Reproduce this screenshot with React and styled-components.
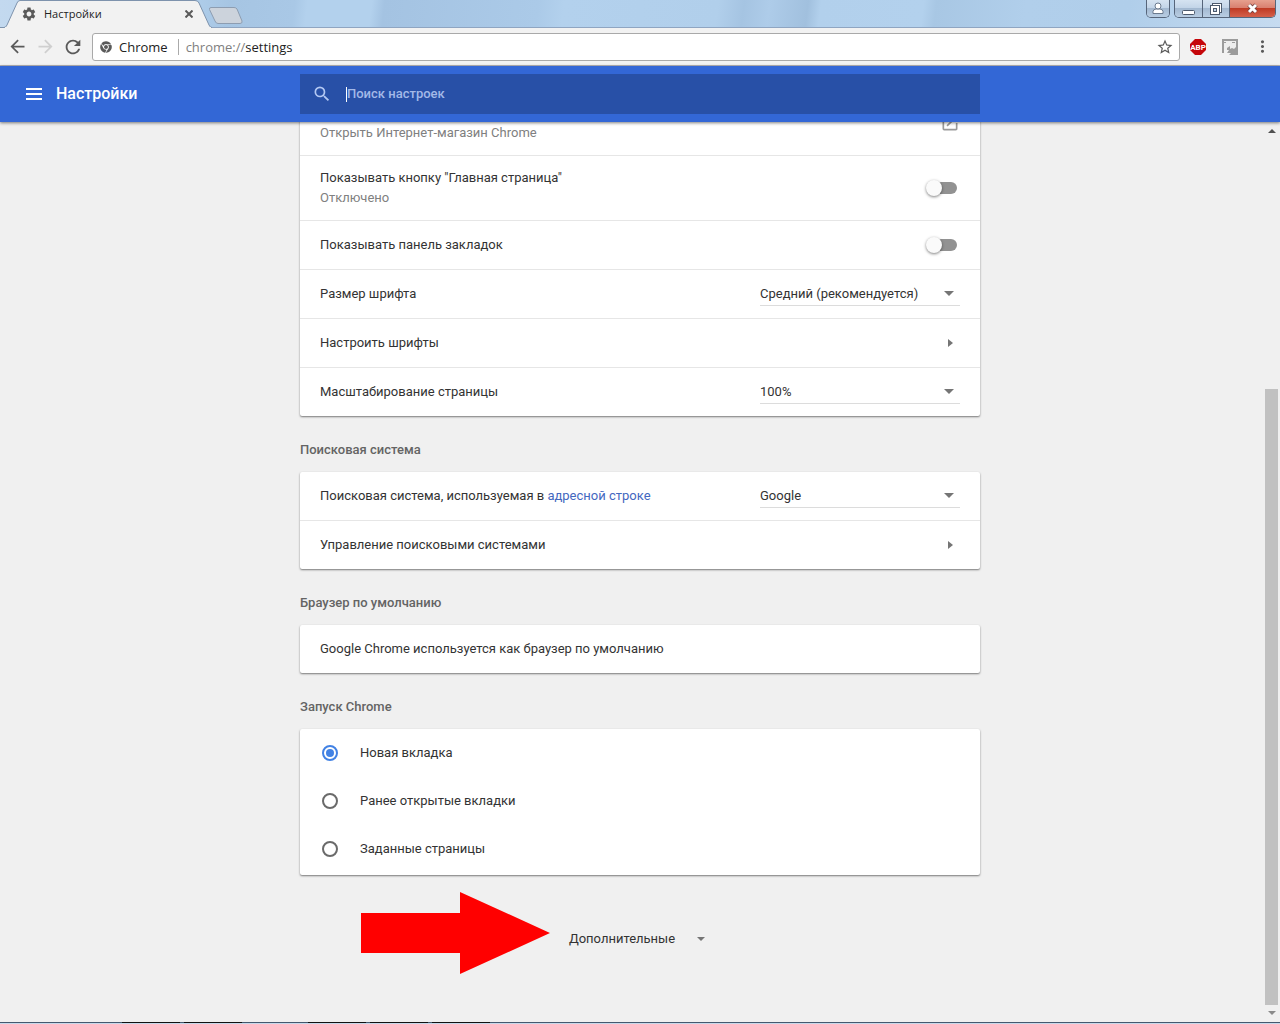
import React from 'react';
import styled, { createGlobalStyle } from 'styled-components';
import {
  MdArrowBack,
  MdArrowForward,
  MdMoreVert,
  MdOpenInNew,
  MdRefresh,
  MdSearch,
  MdSettings,
  MdStarBorder,
} from 'react-icons/md';
import { FaChrome } from 'react-icons/fa';

const GlobalStyle = createGlobalStyle`
  * {
    box-sizing: border-box;
  }

  body {
    margin: 0;
    background: #f0f0f0;
    color: #333;
    font-family: Roboto, "Liberation Sans", sans-serif;
    font-size: 13px;
    line-height: 20px;
  }

  button, input, select {
    margin: 0;
    padding: 0;
    border: 0;
    border-radius: 0;
    background: none;
    color: inherit;
    font: inherit;
  }
`;

const Window = styled.div`
  display: flex;
  flex-direction: column;
  height: 100vh;
  overflow: hidden;
`;

/* Title bar */

const TitleBar = styled.div`
  display: flex;
  align-items: flex-start;
  justify-content: space-between;
  height: 28px;
  background: linear-gradient(
    97deg,
    #c3d9ef 0%,
    #b3d1ed 14%,
    #a6c5e3 18%,
    #a9c8e6 23%,
    #b3d1ed 24%,
    #b3d1ed 29%,
    #a4c3e2 30%,
    #abcae8 42%,
    #b3d1ed 44%,
    #b1cfeb 56%,
    #a5c4e2 58%,
    #aecce9 60%,
    #a1c0de 63%,
    #b2d0ec 64%,
    #b3d1ed 72%,
    #a8c7e4 73%,
    #b1cfeb 80%,
    #b0ceea 88%,
    #c6dbf0 100%
  );
  box-shadow: inset 0 -1px #8fa5c1;
  font-family: "Open Sans", "Noto Sans", sans-serif;
  font-size: 12px;
`;

const Tabs = styled.div`
  display: flex;
  align-items: center;
  height: 28px;
`;

const Tab = styled.div`
  position: relative;
  display: flex;
  align-items: center;
  gap: 7px;
  width: 212px;
  height: 28px;
  padding: 0 16px 0 21px;
`;

const TabShape = styled.svg`
  position: absolute;
  inset: 0;
  z-index: 0;
`;

const TabTitle = styled.span`
  z-index: 1;
  flex: 1;
  font-size: 11px;
  color: #222;
`;

const TabIcon = styled(MdSettings)`
  z-index: 1;
  color: #5a5a5a;
`;

const IconButton = styled.button`
  display: flex;
  align-items: center;
  justify-content: center;
  z-index: 1;
  width: ${(props) => props.$width || 28}px;
  height: 28px;
  color: ${(props) => props.$color || '#5a5a5a'};
`;

const NewTabButton = styled(IconButton)`
  margin-left: -4px;
  padding-top: 3px;
`;

const WindowControls = styled.div`
  display: flex;
  padding-right: 4px;
`;

const ControlGroup = styled.div`
  display: flex;
  margin-left: 4px;
  border: 1px solid #56657a;
  border-top: 0;
  border-radius: 0 0 5px 5px;
  overflow: hidden;
`;

const ControlButton = styled.button`
  display: flex;
  align-items: center;
  justify-content: center;
  width: ${(props) => props.$width}px;
  height: 17px;
  background: ${(props) =>
    props.$close
      ? 'linear-gradient(#e6a08f 0%, #d98070 45%, #bf3b25 50%, #d5604a 100%)'
      : 'linear-gradient(#d5e3f1 0%, #c3d5e8 45%, #a3b9d1 50%, #b9cee3 100%)'};

  & + & {
    border-left: 1px solid #56657a;
  }
`;

/* Toolbar */

const Toolbar = styled.div`
  display: flex;
  align-items: center;
  height: 38px;
  padding: 0 4px 0 3px;
  border-bottom: 1px solid #b6b4b6;
  background: #f2f2f2;
`;

const Omnibox = styled.div`
  display: flex;
  flex: 1;
  align-items: center;
  height: 28px;
  margin: 0 4px 0 5px;
  padding-left: 7px;
  border: 1px solid #a9a9a9;
  border-radius: 3px;
  background: #fff;
  color: #222;
  font-family: "Open Sans", "Noto Sans", sans-serif;
`;

const SiteName = styled.span`
  margin-left: 7px;
  padding-right: 10px;
  border-right: 1px solid #aaa;
  line-height: 16px;
`;

const Address = styled.span`
  flex: 1;
  padding-left: 7px;
`;

const Scheme = styled.span`
  color: #808080;
`;

/* Settings header */

const Header = styled.header`
  display: grid;
  grid-template-columns: minmax(150px, 1fr) minmax(0, 680px) minmax(16px, 1fr);
  align-items: center;
  z-index: 2;
  flex: none;
  height: 56px;
  background: #3367d6;
  box-shadow: 0 1px 3px rgba(0, 0, 0, 0.5);
  color: #fff;
`;

const Brand = styled.div`
  display: flex;
  align-items: center;
  padding-left: 20px;
`;

const PageTitle = styled.h1`
  margin: 0 0 0 8px;
  font-size: 16px;
  font-weight: 500;
`;

const SearchBox = styled.label`
  display: flex;
  align-items: center;
  height: 40px;
  padding: 0 12px;
  background: #2850a7;
  color: #b3c8f3;
`;

const Caret = styled.span`
  width: 1px;
  height: 15px;
  margin-left: 14px;
  background: #fff;
`;

const SearchInput = styled.input`
  flex: 1;
  min-width: 0;
  outline: none;
  font-weight: 500;

  &::placeholder {
    color: #a3b9e8;
    opacity: 1;
  }
`;

/* Settings body */

const Body = styled.div`
  display: grid;
  grid-template-columns: minmax(16px, 1fr) minmax(0, 680px) minmax(16px, 1fr);
  flex: 1;
  min-height: 0;
  overflow: hidden;
`;

const Content = styled.main`
  display: flex;
  flex-direction: column;
  grid-column: 2;
  justify-content: flex-end;
  min-height: 0;
`;

const SectionTitle = styled.h2`
  margin: 24px 0 12px;
  color: #646464;
  font-size: 13px;
  font-weight: 500;
`;

const Card = styled.section`
  flex: none;
  padding-bottom: ${(props) => (props.$radios ? 2 : 0)}px;
  border-radius: 2px;
  background: #fff;
  box-shadow: 0 1px 2px rgba(0, 0, 0, 0.5);
`;

const Row = styled.div`
  box-sizing: content-box;
  display: flex;
  align-items: center;
  justify-content: space-between;
  min-height: ${(props) => (props.$tall ? 64 : 48)}px;
  padding: 0 20px;

  & + & {
    border-top: 1px solid #e6e6e6;
  }
`;

const StoreLink = styled.a`
  align-self: flex-end;
  padding-bottom: 12px;
  color: #808080;
  text-decoration: none;
`;

const Label = styled.label`
  display: flex;
  flex-direction: column;
`;

const Hint = styled.span`
  color: #808080;
`;

const Link = styled.a`
  color: #4468bf;
  text-decoration: none;
`;

const Toggle = styled.input`
  appearance: none;
  display: flex;
  align-items: center;
  width: 31px;
  height: 16px;
  margin-right: 3px;

  &::before {
    content: '';
    width: 16px;
    height: 16px;
    border-radius: 50%;
    background: #fafafa;
    box-shadow: 0 1px 3px rgba(0, 0, 0, 0.5);
    z-index: 1;
  }

  &::after {
    content: '';
    width: 23px;
    height: 12px;
    margin-left: -8px;
    border-radius: 6px;
    background: #929292;
  }
`;

const SelectBox = styled.div`
  display: grid;
  align-items: center;
  width: 200px;
  border-bottom: 1px solid #dcdcdc;

  & > * {
    grid-area: 1 / 1;
  }

  & > svg {
    justify-self: end;
    margin-right: 6px;
    pointer-events: none;
  }
`;

const Select = styled.select`
  appearance: none;
  height: 22px;
  outline: none;
`;

const ArrowButton = styled.button`
  display: flex;
  align-items: center;
  justify-content: center;
  width: 20px;
  height: 20px;
`;

const RadioRow = styled.label`
  display: flex;
  align-items: center;
  gap: 22px;
  height: 48px;
  padding: 0 22px;
`;

const Radio = styled.input`
  appearance: none;
  display: grid;
  place-items: center;
  width: 16px;
  height: 16px;
  border: 2px solid #6a6a6a;
  border-radius: 50%;

  &:checked {
    border-color: #4282e4;
  }

  &:checked::before {
    content: '';
    width: 8px;
    height: 8px;
    border-radius: 50%;
    background: #4282e4;
  }
`;

const Advanced = styled.div`
  position: relative;
  display: flex;
  flex: none;
  justify-content: center;
  padding: 46px 0 65px;
`;

const AdvancedButton = styled.button`
  display: flex;
  align-items: center;
  gap: 22px;
  height: 36px;
  padding-right: 6px;
`;

const Pointer = styled.svg`
  position: absolute;
  top: 17px;
  right: calc(50% + 90px);
`;

const Scrollbar = styled.div`
  display: flex;
  flex-direction: column;
  align-items: center;
  justify-self: end;
  width: 17px;
  padding: 7px 0;
`;

const ScrollTrack = styled.div`
  display: flex;
  flex: 1;
  flex-direction: column;
  justify-content: flex-end;
  align-self: stretch;
  margin: 4px 2px 6px;
`;

const Thumb = styled.div`
  height: 71%;
  background: #c1c1c1;
`;

const Taskbar = styled.div`
  display: flex;
  flex: none;
  height: 2px;
  padding-left: 122px;
  border-top: 1px solid #44586e;
  background: #c8d9ea;
`;

const TaskGroup = styled.div`
  display: flex;
  gap: 4px;
  margin: -1px 66px 0 0;
`;

const Task = styled.div`
  width: 58px;
  height: 1px;
  background: #111;
`;

const DownArrow = ({ size = 10 }) => (
  <svg width={size} height={size / 2} viewBox="0 0 10 5" fill="#757575">
    <path d="M0 0h10L5 5z" />
  </svg>
);

const TabBackground = () => (
  <TabShape width="212" height="28" viewBox="0 0 212 28">
    <path
      d="M0 27.5H4Q6 27.5 7 25L17 3Q18 .5 20 .5H195Q198 .5 199 3L209 25Q210 27.5 212 27.5V28H0Z"
      fill="#f2f2f2"
      stroke="#7e93ad"
    />
    <path d="M5 28H211" stroke="#f2f2f2" strokeWidth="2" />
  </TabShape>
);

const Dropdown = ({ label, value }) => (
  <SelectBox>
    <Select aria-label={label} defaultValue={value}>
      <option>{value}</option>
    </Select>
    <DownArrow />
  </SelectBox>
);

const NextButton = ({ label }) => (
  <ArrowButton aria-label={label}>
    <svg width="5" height="8" viewBox="0 0 5 8" fill="#757575">
      <path d="M0 0v8l5-4z" />
    </svg>
  </ArrowButton>
);

const Controls = () => (
  <WindowControls>
    <ControlGroup>
      <ControlButton $width={22} aria-label="Профиль">
        <svg width="12" height="13" viewBox="0 0 12 13" fill="#fff" stroke="#6b7b8f">
          <path d="M1 11.500V9.500Q1 7.500 4 7H8Q11 7.500 11 9.500V11.500Z" />
          <circle cx="6" cy="4" r="3" />
        </svg>
      </ControlButton>
    </ControlGroup>
    <ControlGroup>
      <ControlButton $width={27} aria-label="Свернуть">
        <svg width="13" height="14" viewBox="0 0 13 14">
          <rect x="0.5" y="8.500" width="12" height="4" rx="1" fill="#fff" stroke="#4c5a6d" />
        </svg>
      </ControlButton>
      <ControlButton $width={27} aria-label="Развернуть">
        <svg width="12" height="12" viewBox="0 0 12 12" fill="#fff" stroke="#4c5a6d">
          <rect x="2.500" y="0.500" width="9" height="9" />
          <rect x="0.500" y="2.500" width="9" height="9" />
          <rect x="3.500" y="5.500" width="3" height="3" fill="#c3d5e8" />
        </svg>
      </ControlButton>
      <ControlButton $width={46} $close aria-label="Закрыть">
        <svg width="13" height="11" viewBox="0 0 13 11">
          <path d="M3 2l7 7M10 2l-7 7" stroke="#6b3a3a" strokeWidth="4.500" />
          <path d="M3 2l7 7M10 2l-7 7" stroke="#fff" strokeWidth="3" />
        </svg>
      </ControlButton>
    </ControlGroup>
  </WindowControls>
);

const startupOptions = ['Новая вкладка', 'Ранее открытые вкладки', 'Заданные страницы'];

const App = () => (
  <Window>
    <GlobalStyle />
    <TitleBar>
      <Tabs>
        <Tab>
          <TabBackground />
          <TabIcon size={16} />
          <TabTitle>Настройки</TabTitle>
          <IconButton $width={14} aria-label="Закрыть вкладку">
            <svg width="8" height="8" viewBox="0 0 8 8">
              <path d="M.5 .5l7 7M7.500 .5l-7 7" stroke="#5a5a5a" strokeWidth="2" />
            </svg>
          </IconButton>
        </Tab>
        <NewTabButton $width={36} aria-label="Открыть новую вкладку">
          <svg width="34" height="17" viewBox="0 0 34 17">
            <path
              d="M2 .5H25Q27 .5 28 2L33 14Q33.500 16.500 31 16.500H9Q7 16.500 6 14L.5 2.500Q0 .5 2 .5Z"
              fill="#ccd3dc"
              stroke="#8d9db1"
            />
          </svg>
        </NewTabButton>
      </Tabs>
      <Controls />
    </TitleBar>

    <Toolbar>
      <IconButton aria-label="Назад">
        <MdArrowBack size={21} />
      </IconButton>
      <IconButton aria-label="Вперёд" $color="#cfcfcf">
        <MdArrowForward size={21} />
      </IconButton>
      <IconButton aria-label="Обновить">
        <MdRefresh size={22} />
      </IconButton>
      <Omnibox>
        <FaChrome size={12} color="#5a5a5a" />
        <SiteName>Chrome</SiteName>
        <Address>
          <Scheme>chrome://</Scheme>settings
        </Address>
        <IconButton aria-label="Добавить в закладки">
          <MdStarBorder size={18} />
        </IconButton>
      </Omnibox>
      <IconButton aria-label="Adblock Plus">
        <svg width="16" height="16" viewBox="0 0 16 16">
          <path d="M5 0h6l5 5v6l-5 5H5l-5-5V5z" fill="#c5070b" />
          <text x="8" y="11" fill="#fff" fontFamily="Roboto" fontSize="8" fontWeight="700" textAnchor="middle">
            ABP
          </text>
        </svg>
      </IconButton>
      <IconButton $width={36} aria-label="Расширение">
        <svg width="16" height="16" viewBox="0 0 16 16">
          <path d="M0 0h16v16H7l2-2H5l2-3H2v3H0z" fill="#9b9b9b" />
          <path d="M2 2h12v6l-2 2-2-1-2 1V7L5 9v2H2z" fill="#ededed" />
          <path d="M2 3h2v1H2zM10 3h3v1h-3z" fill="#9b9b9b" />
        </svg>
      </IconButton>
      <IconButton aria-label="Меню">
        <MdMoreVert size={19} />
      </IconButton>
    </Toolbar>

    <Header>
      <Brand>
        <IconButton aria-label="Главное меню" $color="#fff">
          <svg width="16" height="12" viewBox="0 0 16 12" fill="#fff">
            <path d="M0 0h16v2H0zM0 5h16v2H0zM0 10h16v2H0z" />
          </svg>
        </IconButton>
        <PageTitle>Настройки</PageTitle>
      </Brand>
      <SearchBox>
        <MdSearch size={20} />
        <Caret />
        <SearchInput type="text" aria-label="Поиск настроек" placeholder="Поиск настроек" />
      </SearchBox>
    </Header>

    <Body>
      <Content>
        <Card>
          <Row $tall>
            <StoreLink href="#store">Открыть Интернет-магазин Chrome</StoreLink>
            <MdOpenInNew size={20} color="#9a9a9a" />
          </Row>
          <Row $tall>
            <Label htmlFor="home-button">
              Показывать кнопку "Главная страница"
              <Hint>Отключено</Hint>
            </Label>
            <Toggle type="checkbox" id="home-button" />
          </Row>
          <Row>
            <Label htmlFor="bookmarks-bar">Показывать панель закладок</Label>
            <Toggle type="checkbox" id="bookmarks-bar" />
          </Row>
          <Row>
            Размер шрифта
            <Dropdown label="Размер шрифта" value="Средний (рекомендуется)" />
          </Row>
          <Row>
            Настроить шрифты
            <NextButton label="Настроить шрифты" />
          </Row>
          <Row>
            Масштабирование страницы
            <Dropdown label="Масштабирование страницы" value="100%" />
          </Row>
        </Card>

        <SectionTitle>Поисковая система</SectionTitle>
        <Card>
          <Row>
            <span>
              Поисковая система, используемая в <Link href="#omnibox">адресной строке</Link>
            </span>
            <Dropdown label="Поисковая система" value="Google" />
          </Row>
          <Row>
            Управление поисковыми системами
            <NextButton label="Управление поисковыми системами" />
          </Row>
        </Card>

        <SectionTitle>Браузер по умолчанию</SectionTitle>
        <Card>
          <Row>Google Chrome используется как браузер по умолчанию</Row>
        </Card>

        <SectionTitle>Запуск Chrome</SectionTitle>
        <Card $radios>
          {startupOptions.map((option, index) => (
            <RadioRow key={option}>
              <Radio type="radio" name="startup" defaultChecked={index === 0} />
              {option}
            </RadioRow>
          ))}
        </Card>

        <Advanced>
          <Pointer width="189" height="82" viewBox="0 0 189 82" fill="#f00">
            <path d="M0 21H99V0L189 41L99 82V61H0Z" />
          </Pointer>
          <AdvancedButton>
            Дополнительные
            <DownArrow size={8} />
          </AdvancedButton>
        </Advanced>
      </Content>
      <Scrollbar>
        <svg width="8" height="4" viewBox="0 0 8 4" fill="#505050">
          <path d="M0 4h8L4 0z" />
        </svg>
        <ScrollTrack>
          <Thumb />
        </ScrollTrack>
        <svg width="8" height="4" viewBox="0 0 8 4" fill="#8a8a8a">
          <path d="M0 0h8L4 4z" />
        </svg>
      </Scrollbar>
    </Body>

    <Taskbar>
      <TaskGroup>
        <Task />
        <Task />
      </TaskGroup>
      <TaskGroup>
        <Task />
        <Task />
        <Task />
      </TaskGroup>
    </Taskbar>
  </Window>
);

export default App;
